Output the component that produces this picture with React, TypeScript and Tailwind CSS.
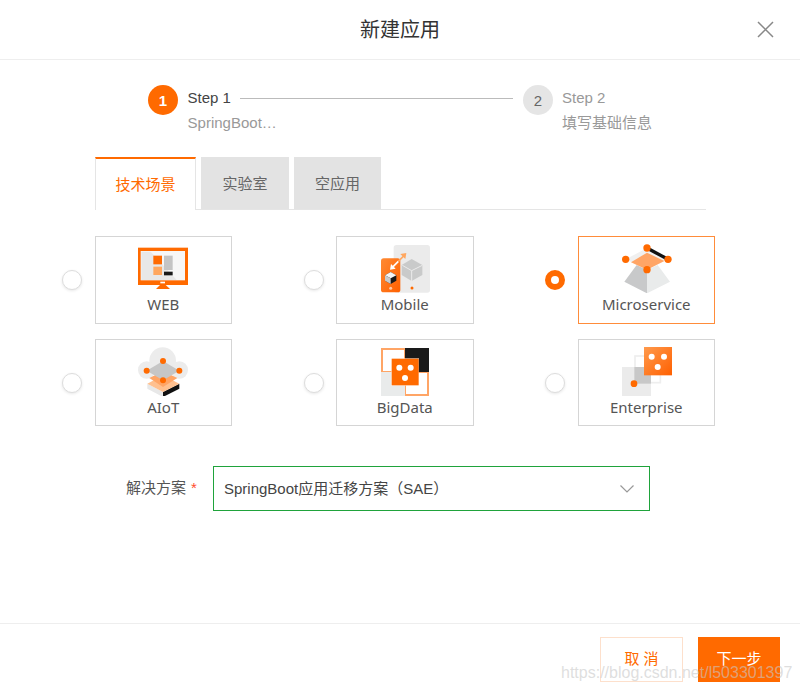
import React from "react";

const ORANGE = "#ff6a00";

function IconSvg({ box, children }: { box: string; children: React.ReactNode }) {
  return (
    <svg viewBox={box} width={81} height={56} className="block shrink-0">
      {children}
    </svg>
  );
}

function WebIcon() {
  return (
    <IconSvg box="219 21 243 168">
      <rect x="264" y="53" width="150" height="112" fill={ORANGE} />
      <rect x="272" y="63" width="133" height="88" fill="#f7f7f7" />
      <polygon points="274,65 302,65 380,150 274,150" fill="#e8e8e8" />
      <rect x="310" y="77" width="26" height="26" fill={ORANGE} />
      <rect x="310" y="110" width="26" height="25" fill="#ffa75f" />
      <rect x="342" y="77" width="26" height="43" fill="#c4c4c4" />
      <rect x="342" y="125" width="26" height="11" fill="#1a1a1a" />
      <rect x="331" y="155" width="14" height="5" fill="#ffffff" />
      <polygon points="330,165 347,165 360,177 318,177" fill={ORANGE} />
    </IconSvg>
  );
}

function MobileIcon() {
  return (
    <IconSvg box="207 21 243 168">
      <defs>
        <linearGradient id="phone" x1="0" y1="0" x2="1" y2="1">
          <stop offset="0" stopColor="#ff8a33" />
          <stop offset="1" stopColor="#ff6000" />
        </linearGradient>
      </defs>
      <rect x="296" y="45" width="109" height="143" rx="8" fill="#ebebeb" />
      <polygon points="350,87 382,105 382,135 350,153 320,135 320,105" fill="#c9caca" />
      <polyline points="322,106 350,122 382,106" fill="none" stroke="#ebebeb" strokeWidth="3" />
      <line x1="350" y1="122" x2="350" y2="153" stroke="#ebebeb" strokeWidth="3" />
      <circle cx="351" cy="174" r="4.5" fill={ORANGE} />
      <rect x="258" y="85" width="58" height="102" rx="8" fill="url(#phone)" />
      <polygon points="287,126 304,136 304,152 287,162 270,152 270,136" fill="#1a1a1a" />
      <polygon points="287,126 304,136 287,145 270,136" fill="#f5f5f5" />
      <polygon points="270,136 287,145 287,162 270,152" fill="#c9caca" />
      <circle cx="287" cy="175" r="4.5" fill="#ffc9a3" />
      <line x1="292" y1="112" x2="310" y2="94" stroke="#ffffff" strokeWidth="5" />
      <polygon points="285,119 288,102 302,116" fill="#ffffff" />
      <line x1="310" y1="94" x2="326" y2="78" stroke="#ffa75f" strokeWidth="5" />
      <polygon points="334,69 316,72 331,87" fill="#ffa75f" />
    </IconSvg>
  );
}

function MicroIcon() {
  return (
    <IconSvg box="213 21 243 168">
      <polygon points="305,105 336,120 336,190 268,155" fill="#c8c9ca" />
      <polygon points="368,105 336,120 336,190 405,155" fill="#e9ebeb" />
      <polygon points="272,88 336,54 399,88 336,119" fill="#f0f0f0" />
      <polygon points="288,97 336,68 388,93 336,119" fill="#ffa566" />
      <line x1="336" y1="54" x2="399" y2="88" stroke="#111111" strokeWidth="10" />
      <circle cx="336" cy="54" r="11" fill={ORANGE} />
      <circle cx="272" cy="88" r="11" fill={ORANGE} />
      <circle cx="399" cy="88" r="11" fill={ORANGE} />
      <circle cx="336" cy="119" r="11" fill={ORANGE} />
    </IconSvg>
  );
}

function AiotIcon() {
  return (
    <IconSvg box="219 24 243 168">
      <circle cx="338" cy="86" r="40" fill="#ececec" />
      <circle cx="290" cy="114" r="26" fill="#ececec" />
      <circle cx="388" cy="114" r="26" fill="#ececec" />
      <polygon points="292,170 339,195 339,180 292,155" fill="#e8e8e8" />
      <polygon points="388,170 339,195 339,180 388,155" fill="#111111" />
      <polygon points="292,155 339,130 388,155 339,180" fill="#ffc08f" />
      <polygon points="298,138 339,118 382,138 339,165" fill="#ffa566" />
      <polygon points="339,87 388,116 339,145 290,116" fill="#c6c6c6" />
      <circle cx="339" cy="87" r="9" fill={ORANGE} />
      <circle cx="290" cy="116" r="9" fill={ORANGE} />
      <circle cx="388" cy="116" r="9" fill={ORANGE} />
      <circle cx="339" cy="145" r="9" fill={ORANGE} />
    </IconSvg>
  );
}

function BigDataIcon() {
  return (
    <IconSvg box="207 24 243 168">
      <rect x="261" y="51" width="69" height="69" fill="#ffffff" stroke="#ffa566" strokeWidth="6" />
      <rect x="330" y="120" width="69" height="69" fill="#ffffff" stroke="#ffa566" strokeWidth="6" />
      <rect x="330" y="48" width="72" height="72" fill="#1a1a1a" />
      <rect x="258" y="120" width="72" height="72" fill="#e9ebeb" />
      <rect x="288" y="78" width="84" height="84" fill="#ffffff" opacity="0.6" />
      <rect x="290" y="80" width="81" height="80" fill={ORANGE} />
      <circle cx="313" cy="107" r="9" fill="#ffffff" />
      <circle cx="347" cy="107" r="9" fill="#ffffff" />
      <circle cx="330" cy="138" r="9" fill="#ffffff" />
    </IconSvg>
  );
}

function EnterpriseIcon() {
  return (
    <IconSvg box="213 24 243 168">
      <defs>
        <linearGradient id="ent" x1="0" y1="0" x2="1" y2="1">
          <stop offset="0" stopColor="#ff9a4d" />
          <stop offset="1" stopColor="#ff6000" />
        </linearGradient>
      </defs>
      <rect x="261" y="105" width="87" height="87" fill="#ebebeb" />
      <rect x="300" y="72" width="76" height="80" fill="none" stroke="#eeeeee" strokeWidth="5" />
      <rect x="298" y="105" width="50" height="50" fill="#c8c8c8" />
      <rect x="327" y="45" width="84" height="85" fill="url(#ent)" />
      <circle cx="350" cy="74" r="9" fill="#ffffff" />
      <circle cx="387" cy="74" r="9" fill="#ffffff" />
      <circle cx="368" cy="105" r="9" fill="#ffffff" />
      <circle cx="297" cy="155" r="10" fill={ORANGE} />
    </IconSvg>
  );
}

const options: { name: string; icon: React.ReactNode; selected?: boolean; row2?: boolean }[] = [
  { name: "WEB", icon: <WebIcon /> },
  { name: "Mobile", icon: <MobileIcon /> },
  { name: "Microservice", icon: <MicroIcon />, selected: true },
  { name: "AIoT", icon: <AiotIcon />, row2: true },
  { name: "BigData", icon: <BigDataIcon />, row2: true },
  { name: "Enterprise", icon: <EnterpriseIcon />, row2: true },
];

export default function App() {
  return (
    <div className="relative flex h-[691px] w-[800px] flex-col overflow-hidden bg-white font-['Liberation_Sans','Noto_Sans_CJK_SC',sans-serif] text-[15px] text-[#333]">
      <header className="relative flex h-[60px] shrink-0 items-center justify-center border-b border-[#eeeeee]">
        <h1 className="text-[20px] font-normal text-[#333]">新建应用</h1>
        <svg className="absolute right-[26px] top-[21px]" width="17" height="17" viewBox="0 0 17 17" fill="none" stroke="#888888" strokeWidth="1.5">
          <path d="M1 1 L16 16 M16 1 L1 16" />
        </svg>
      </header>

      <div className="mt-[25px] flex h-[50px] shrink-0 pl-[148px] leading-[25px]">
        <div className="flex w-[375px] shrink-0">
          <div className="flex h-[30px] w-[30px] shrink-0 items-center justify-center rounded-full bg-[#ff6a00] text-[15px] font-bold text-white">1</div>
          <div className="ml-[9.6px] min-w-0 flex-1">
            <div className="flex items-center">
              <span className="text-[#444]">Step 1</span>
              <span className="ml-[9.4px] mr-[10px] mt-[2px] h-px flex-1 bg-[#bbbbbb]" />
            </div>
            <div className="text-[#999]">SpringBoot…</div>
          </div>
        </div>
        <div className="flex">
          <div className="flex h-[30px] w-[30px] shrink-0 items-center justify-center rounded-full bg-[#e5e5e5] text-[15px] text-[#666]">2</div>
          <div className="ml-[9px]">
            <div className="text-[#999]">Step 2</div>
            <div className="text-[#999]">填写基础信息</div>
          </div>
        </div>
      </div>

      <div className="ml-[95px] mt-[22px] flex h-[53px] w-[611px] shrink-0 border-b border-[#e5e5e5]">
        <div className="z-10 flex h-[53px] w-[101px] items-center justify-center border-x border-t-2 border-x-[#e5e5e5] border-t-[#ff6a00] bg-white pt-[2px] text-[#ff6a00]">技术场景</div>
        <div className="ml-[5px] flex h-[52px] w-[88px] items-center justify-center bg-[#e3e3e3] pt-[3px] text-[#666]">实验室</div>
        <div className="ml-[5px] flex h-[52px] w-[87px] items-center justify-center bg-[#e3e3e3] pt-[3px] text-[#666]">空应用</div>
      </div>

      <div className="ml-[62px] mt-[26px] grid shrink-0 grid-cols-[repeat(3,241.5px)] gap-y-[15px] font-['Noto_Sans','Noto_Sans_CJK_SC',sans-serif]">
        {options.map((o) => (
          <div key={o.name} className="flex items-center gap-[12.5px]">
            {o.selected ? (
              <span className="h-5 w-5 shrink-0 rounded-full border-[6px] border-[#ff6a00] bg-white" />
            ) : (
              <span className="h-5 w-5 shrink-0 rounded-full border border-[#dddddd] bg-white shadow-[0_1px_3px_rgba(0,0,0,0.1)]" />
            )}
            <div className={`flex w-[137.5px] flex-col items-center border ${o.row2 ? "h-[87px]" : "h-[88px]"} ${o.selected ? "border-[#ff8c3a]" : "border-[#d5d5d5]"}`}>
              {o.icon}
              <div className="h-6 text-[15px] leading-[22px] text-[#555]">{o.name}</div>
            </div>
          </div>
        ))}
      </div>

      <div className="mt-[40px] flex shrink-0 items-center pl-[126px]">
        <span className="w-[60px] text-[#555]">解决方案</span>
        <span className="ml-[5px] w-[22px] text-[#ff4d2e]">*</span>
        <div className="flex h-[45px] w-[437px] items-center justify-between border border-[#1fa33b] pl-[10px] pr-[15px] text-[#444]">
          <span className="pt-[2px]">SpringBoot应用迁移方案（SAE）</span>
          <svg width="14" height="8" viewBox="0 0 14 8" fill="none" stroke="#999999" strokeWidth="1.2">
            <path d="M0.5 0.5 L7 7 L13.5 0.5" />
          </svg>
        </div>
      </div>

      <footer className="mt-auto flex h-[68px] shrink-0 justify-end gap-[15px] border-t border-[#eeeeee] pr-[20px] pt-[13px]">
        <button className="h-[45px] w-[83px] border border-[#fde0cc] bg-white text-[#ff6a00]">取 消</button>
        <button className="h-[45px] w-[82px] bg-[#ff6a00] text-white">下一步</button>
      </footer>

      <div className="pointer-events-none absolute left-[561px] top-[661px] whitespace-nowrap text-[16px] leading-[24px] text-[#c8c8c8]/60">https://blog.csdn.net/l503301397</div>
    </div>
  );
}
